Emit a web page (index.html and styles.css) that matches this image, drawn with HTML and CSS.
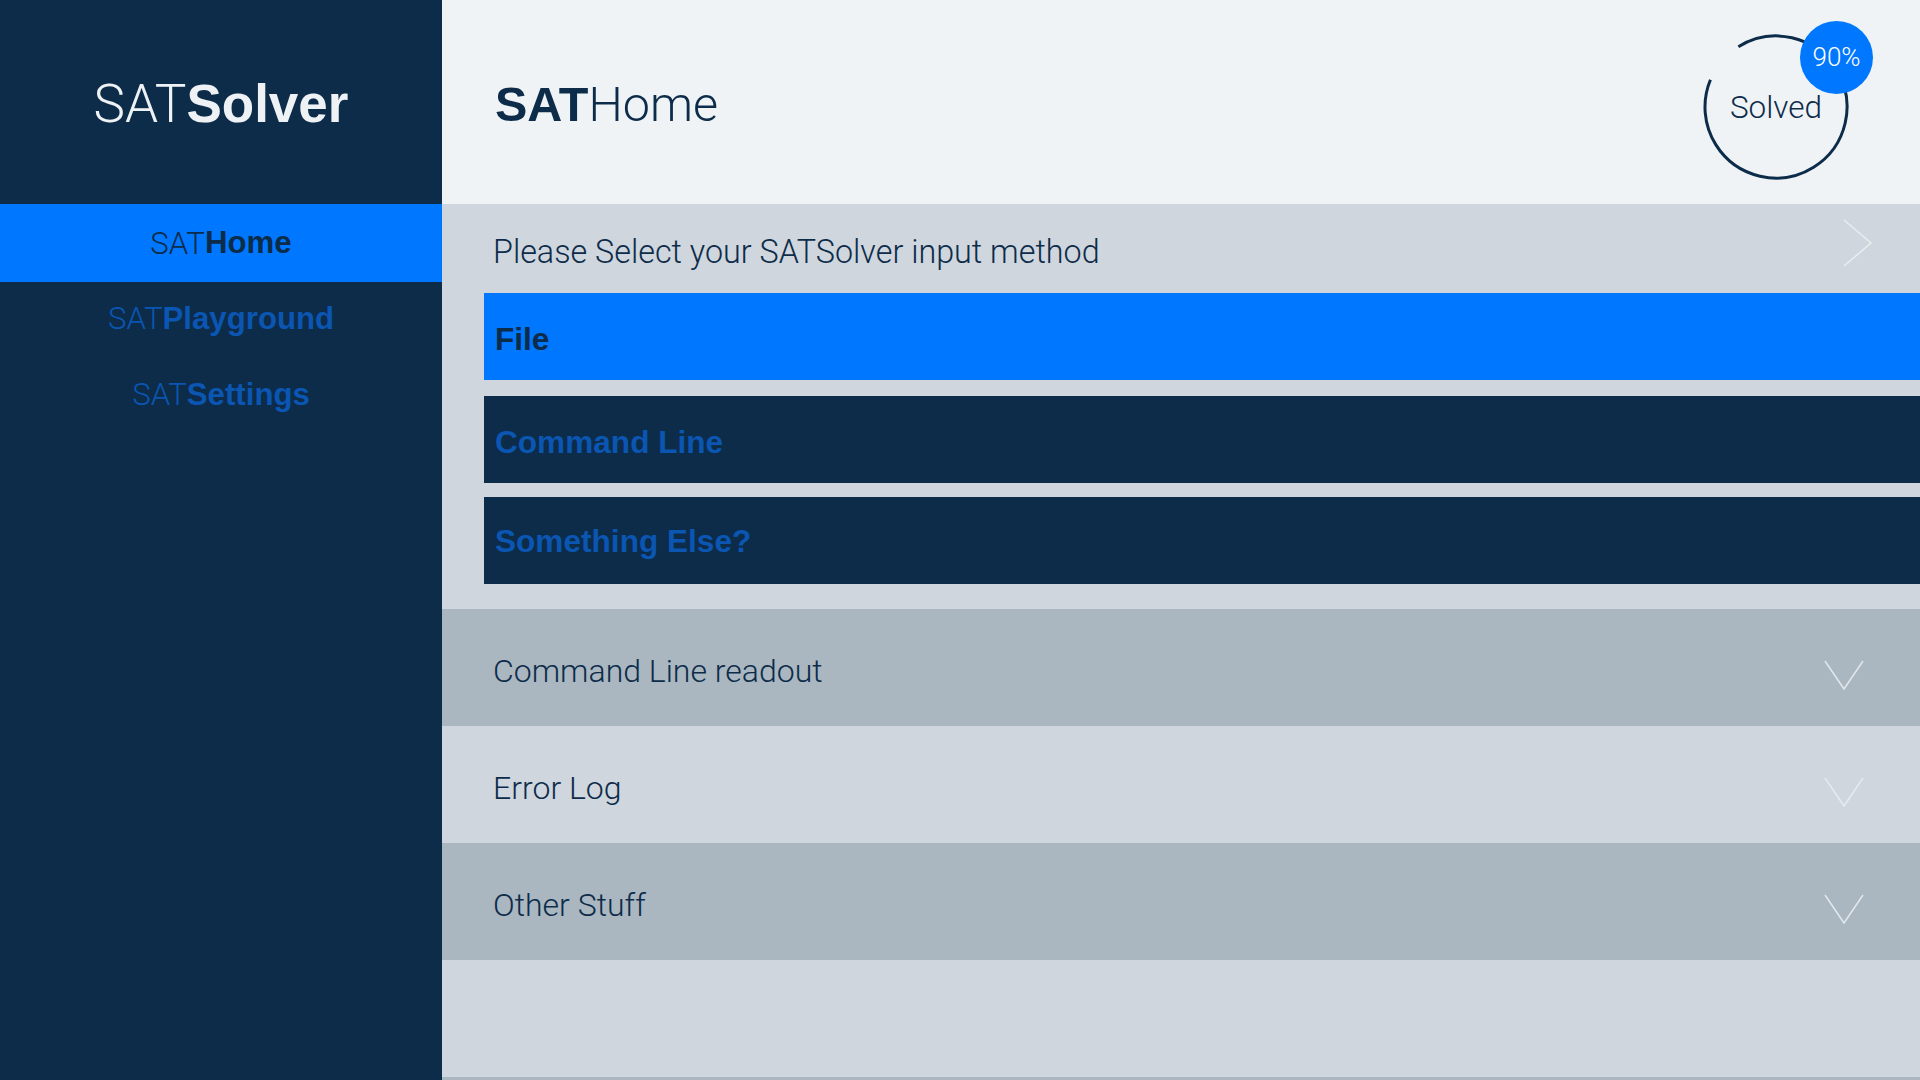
FILE: index.html
```html
<!DOCTYPE html>
<html>
<head>
<meta charset="utf-8">
<link rel="stylesheet" href="styles.css">
</head>
<body>
<div class="app">
  <aside class="sidebar">
    <div class="logo"><span class="lt">SAT</span><b>Solver</b></div>
    <nav class="nav">
      <a class="nav-item active"><span class="lt">SAT</span><b>Home</b></a>
      <a class="nav-item"><span class="lt">SAT</span><b>Playground</b></a>
      <a class="nav-item"><span class="lt">SAT</span><b>Settings</b></a>
    </nav>
  </aside>
  <main class="main">
    <header class="header">
      <h1 class="title"><b>SAT</b><span class="lt">Home</span></h1>
      <div class="solved">
        <svg class="ring" width="146" height="146" viewBox="0 0 146 146">
          <circle cx="73" cy="73" r="71" fill="none" stroke="#0d2c4a" stroke-width="3" stroke-dasharray="401.5 446.1" transform="rotate(238 73 73)"/>
        </svg>
        <span class="solved-label lt">Solved</span>
        <span class="badge lt">90%</span>
      </div>
    </header>
    <section class="input-section">
      <div class="prompt">
        <span class="lt">Please Select your SATSolver input method</span>
        <svg class="chev-right" width="32" height="48" viewBox="0 0 32 48"><polyline points="2,1 29,24 2,47" fill="none" stroke="#e9edf0" stroke-width="1.6"/></svg>
      </div>
      <div class="options">
        <div class="option selected">File</div>
        <div class="option">Command Line</div>
        <div class="option">Something Else?</div>
      </div>
    </section>
    <section class="acc-row dark">
      <span class="lt">Command Line readout</span>
      <svg class="chev-down" width="40" height="30" viewBox="0 0 40 30"><polyline points="1,1 20,29 39,1" fill="none" stroke="#e1e6ea" stroke-width="1.6"/></svg>
    </section>
    <section class="acc-row light">
      <span class="lt">Error Log</span>
      <svg class="chev-down" width="40" height="30" viewBox="0 0 40 30"><polyline points="1,1 20,29 39,1" fill="none" stroke="#e6eaee" stroke-width="1.6"/></svg>
    </section>
    <section class="acc-row dark">
      <span class="lt">Other Stuff</span>
      <svg class="chev-down" width="40" height="30" viewBox="0 0 40 30"><polyline points="1,1 20,29 39,1" fill="none" stroke="#e1e6ea" stroke-width="1.6"/></svg>
    </section>
    <section class="acc-row light"></section>
    <section class="acc-row dark"></section>
  </main>
</div>
</body>
</html>
```
FILE: styles.css
```css
* { box-sizing: border-box; }
html, body { margin: 0; padding: 0; }
body {
  width: 1920px;
  height: 1080px;
  overflow: hidden;
  font-family: "Liberation Sans", Arial, sans-serif;
  color: #0d2c4a;
}
.lt {
  font-family: Roboto, "Liberation Sans", Arial, sans-serif;
  font-weight: 300;
}
b {
  font-family: "Liberation Sans", Arial, sans-serif;
  font-weight: 700;
}
.app {
  display: flex;
  height: 1080px;
}
.sidebar {
  width: 442px;
  flex: 0 0 442px;
  background: #0d2c4a;
  display: flex;
  flex-direction: column;
}
.logo {
  height: 204px;
  display: flex;
  align-items: center;
  justify-content: center;
  color: #eef2f5;
  font-size: 53px;
  padding-top: 3px;
}
.nav { display: flex; flex-direction: column; }
.nav-item {
  height: 76px;
  padding-bottom: 3px;
  display: flex;
  align-items: center;
  justify-content: center;
  font-size: 31.2px;
  color: #0a56b2;
}
.nav-item.active {
  height: 78px;
  padding-bottom: 0;
  background: #0077ff;
  color: #0d2c4a;
}
.main {
  flex: 1;
  display: flex;
  flex-direction: column;
  overflow: hidden;
  background: #cfd6dd;
}
.header {
  height: 204px;
  flex: 0 0 204px;
  background: #eff3f5;
  display: flex;
  align-items: center;
  justify-content: space-between;
  padding-left: 53px;
  padding-right: 71px;
}
.title {
  margin: 0;
  font-size: 48.5px;
  font-weight: 400;
  color: #0d2c4a;
  padding-top: 4px;
}
.solved {
  position: relative;
  width: 146px;
  height: 146px;
  margin-top: 9px;
  display: flex;
  align-items: center;
  justify-content: center;
}
.ring { position: absolute; left: 0; top: 0; }
.solved-label {
  font-size: 31.5px;
  color: #0d2c4a;
  padding-top: 2px;
}
.badge {
  position: absolute;
  left: 97px;
  top: -13px;
  width: 73px;
  height: 73px;
  border-radius: 50%;
  background: #0077ff;
  color: #ffffff;
  font-size: 26px;
  display: flex;
  align-items: center;
  justify-content: center;
}
.input-section {
  background: #cfd6dd;
  height: 405px;
  flex: 0 0 405px;
  padding-bottom: 25px;
}
.prompt {
  height: 89px;
  display: flex;
  align-items: center;
  justify-content: space-between;
  padding-left: 51px;
  padding-right: 46px;
  font-size: 32.3px;
  color: #0d2c4a;
}
.prompt span { padding-top: 6px; }
.chev-right { margin-top: -12px; }
.options {
  display: flex;
  flex-direction: column;
  gap: 16px;
  margin-left: 42px;
}
.option {
  height: 87px;
  display: flex;
  align-items: center;
  padding-left: 11px;
  padding-top: 5px;
  font-size: 31.6px;
  font-weight: 700;
  background: #0d2c4a;
  color: #0a56b2;
}
.option:last-child { margin-top: -2px; padding-top: 2px; }
.option.selected {
  background: #0077ff;
  color: #0d2c4a;
}
.acc-row {
  height: 117px;
  flex: 0 0 117px;
  display: flex;
  align-items: center;
  justify-content: space-between;
  padding-left: 51px;
  padding-right: 56px;
  font-size: 32px;
  color: #0d2c4a;
}
.acc-row span { padding-top: 6px; }
.acc-row .chev-down { margin-top: 14px; }
.acc-row.dark { background: #aab7c0; }
.acc-row.light { background: #cfd6dd; }
```
